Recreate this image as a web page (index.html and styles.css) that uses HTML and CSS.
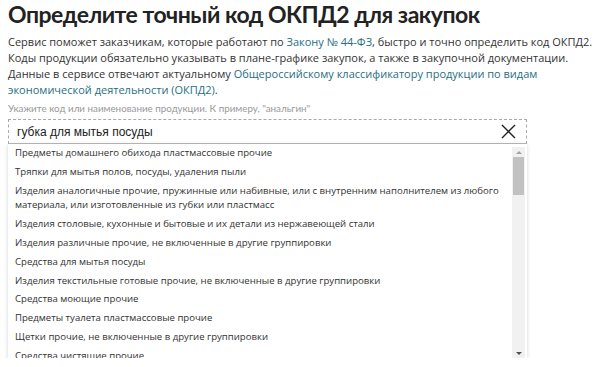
FILE: index.html
```html
<!DOCTYPE html>
<html lang="ru">
<head>
<meta charset="utf-8">
<link rel="stylesheet" href="styles.css">
</head>
<body>
<h1 class="title">Определите точный код ОКПД2 для закупок</h1>
<p class="intro">Сервис поможет заказчикам, которые работают по <a class="link" href="#">Закону № 44-ФЗ</a>, быстро и точно определить код ОКПД2. Коды продукции обязательно указывать в плане-графике закупок, а также в закупочной документации. Данные в сервисе отвечают актуальному <a class="link" href="#">Общероссийскому классификатору продукции по видам экономической деятельности (ОКПД2)</a>.</p>
<div class="hint">Укажите код или наименование продукции. К примеру, "анальгин"</div>
<div class="search">
  <div class="field">
    <span class="query">губка для мытья посуды</span>
    <svg class="clear" width="15" height="15" viewBox="0 0 15 15"><path d="M1 1L14 14M14 1L1 14" stroke="#222" stroke-width="1.4" fill="none"/></svg>
  </div>
  <div class="dropdown">
    <ul class="list">
      <li>Предметы домашнего обихода пластмассовые прочие</li>
      <li>Тряпки для мытья полов, посуды, удаления пыли</li>
      <li>Изделия аналогичные прочие, пружинные или набивные, или с внутренним наполнителем из любого материала, или изготовленные из губки или пластмасс</li>
      <li>Изделия столовые, кухонные и бытовые и их детали из нержавеющей стали</li>
      <li>Изделия различные прочие, не включенные в другие группировки</li>
      <li>Средства для мытья посуды</li>
      <li>Изделия текстильные готовые прочие, не включенные в другие группировки</li>
      <li>Средства моющие прочие</li>
      <li>Предметы туалета пластмассовые прочие</li>
      <li>Щетки прочие, не включенные в другие группировки</li>
      <li>Средства чистящие прочие</li>
    </ul>
    <div class="scrollbar">
      <div class="arrow up"></div>
      <div class="track"><div class="thumb"></div></div>
      <div class="arrow down"></div>
    </div>
  </div>
</div>
</body>
</html>
```
FILE: styles.css
```css
body {
  margin: 0;
  padding: 0 0 0 8px;
  font-family: "Open Sans", "Liberation Sans", sans-serif;
  color: #333;
  background: #fff;
}
.title {
  margin: 0;
  font-family: Lato, "Open Sans", sans-serif;
  font-size: 23px;
  line-height: 28px;
  font-weight: 700;
  letter-spacing: -0.5px;
  color: #222;
}
.intro {
  margin: 6px 0 0;
  font-size: 11px;
  line-height: 16px;
  color: #333;
}
.link {
  color: #1f6f7f;
  text-decoration: none;
}
.hint {
  margin-top: 4px;
  font-family: Lato, "Open Sans", sans-serif;
  font-size: 9.8px;
  line-height: 12px;
  color: #999;
}
.search {
  width: 519px;
  margin-top: 5px;
}
.field {
  box-sizing: border-box;
  height: 25px;
  border: 1px dashed #aaa;
  border-bottom: 1px solid #bbb;
  display: flex;
  align-items: center;
  padding: 0 10px 0 8px;
}
.query {
  flex: 1;
  font-family: "Liberation Sans", Arial, sans-serif;
  font-size: 12px;
  color: #222;
}
.clear {
  display: block;
}
.dropdown {
  display: flex;
  height: 214px;
  box-shadow: 0 1px 4px rgba(0,0,0,0.18);
  background: #fff;
}
.list {
  flex: 1;
  margin: 0;
  padding: 0 10px 0 7px;
  list-style: none;
  overflow: hidden;
  font-size: 9.6px;
  line-height: 14.8px;
  color: #333;
}
.list li {
  padding: 2px 0;
}
.scrollbar {
  width: 13px;
  margin: 3px 2px 0 0;
  display: flex;
  flex-direction: column;
  background: #f1f1f1;
}
.arrow {
  height: 10px;
  display: flex;
  align-items: center;
  justify-content: center;
}
.arrow.up::before {
  content: "";
  border-left: 3px solid transparent;
  border-right: 3px solid transparent;
  border-bottom: 3px solid #a3a3a3;
}
.arrow.down::before {
  content: "";
  border-left: 3px solid transparent;
  border-right: 3px solid transparent;
  border-top: 3px solid #505050;
}
.track {
  flex: 1;
  padding: 0 1px;
}
.thumb {
  height: 38px;
  background: #c1c1c1;
}
```
